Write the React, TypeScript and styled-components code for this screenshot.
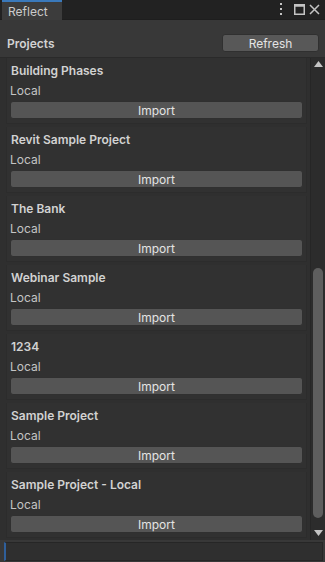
import React from "react";
import styled, { createGlobalStyle } from "styled-components";

const Global = createGlobalStyle`
  html, body { margin: 0; padding: 0; background: #383838; }
  body { font-family: Inter, "Noto Sans", "Liberation Sans", sans-serif; }
  * { box-sizing: border-box; }
`;

const Window = styled.div`
  width: 325px;
  height: 562px;
  display: flex;
  flex-direction: column;
  background: #383838;
  overflow: hidden;
`;

const TabBar = styled.div`
  height: 20px;
  flex: none;
  display: flex;
  align-items: flex-end;
  justify-content: space-between;
  background: #222222;
  border-bottom: 1px solid #1e1e1e;
`;

const Tab = styled.div`
  width: 60px;
  height: 20px;
  margin-left: 2px;
  margin-bottom: -1px;
  padding-left: 6px;
  display: flex;
  align-items: center;
  background: #3c3c3c;
  border-top: 2px solid #3a79bb;
  color: #cccccc;
  font-size: 12px;
`;

const TabIcons = styled.div`
  display: flex;
  align-items: center;
  height: 20px;
  padding-right: 5px;
`;

const IconSlot = styled.span<{ $gap: number }>`
  display: flex;
  margin-left: ${(p) => p.$gap}px;
`;

const Header = styled.div`
  height: 37px;
  flex: none;
  display: flex;
  align-items: flex-end;
  justify-content: space-between;
  padding: 0 6px 5px 7px;
`;

const Title = styled.div`
  color: #d2d2d2;
  font-size: 12px;
  font-weight: 600;
  padding-bottom: 1px;
`;

const Button = styled.div<{ $w?: number }>`
  height: 18px;
  width: ${(p) => (p.$w ? `${p.$w}px` : "auto")};
  display: flex;
  align-items: center;
  justify-content: center;
  background: #585858;
  border: 1px solid #303030;
  border-radius: 3px;
  color: #e4e4e4;
  font-size: 12px;
`;

const ScrollArea = styled.div`
  flex: 1;
  display: flex;
  min-height: 0;
  background: #2f2f2f;
  border-top: 1px solid #2a2a2a;
`;

const List = styled.div`
  flex: 1;
  display: flex;
  flex-direction: column;
  gap: 3px;
  padding: 0 3px 0 6px;
  overflow: hidden;
`;

const Card = styled.div`
  height: 66px;
  flex: none;
  display: flex;
  flex-direction: column;
  padding: 3px 3px 0 3px;
  background: #313131;
  border: 1px solid #2c2c2c;
  border-top: none;
`;

const CardTitle = styled.div`
  color: #d2d2d2;
  font-size: 12px;
  font-weight: 600;
  height: 20px;
  line-height: 20px;
  padding-left: 1px;
`;

const CardSub = styled.div`
  color: #c4c4c4;
  font-size: 12px;
  height: 20px;
  line-height: 20px;
`;

const ImportButton = styled(Button)`
  height: 18px;
  background: #555555;
`;

const ScrollBar = styled.div`
  width: 15px;
  flex: none;
  display: flex;
  flex-direction: column;
  align-items: center;
  background: #2c2c2c;
  border-left: 1px solid #262626;
  padding: 3px 0 4px;
`;

const Track = styled.div`
  flex: 1;
  width: 100%;
  display: flex;
  flex-direction: column;
  justify-content: flex-end;
  align-items: center;
  padding: 0 0 12px;
`;

const Thumb = styled.div`
  width: 10px;
  height: 250px;
  background: #5e5e5e;
  border-radius: 5px;
`;

const Footer = styled.div`
  height: 22px;
  flex: none;
  padding: 2px 2px 1px 4px;
  background: #383838;
`;

const FooterField = styled.div`
  height: 100%;
  background: #2f2f2f;
  border: 1px solid #262626;
  border-left: 2px solid #2f5f9a;
`;

const projects = [
  "Building Phases",
  "Revit Sample Project",
  "The Bank",
  "Webinar Sample",
  "1234",
  "Sample Project",
  "Sample Project - Local",
];

const Arrow = ({ up }: { up?: boolean }) => (
  <svg width="9" height="6" viewBox="0 0 9 6">
    <polygon points={up ? "4.5,0 9,6 0,6" : "0,0 9,0 4.5,6"} fill="#c4c4c4" />
  </svg>
);

export default function App() {
  return (
    <Window>
      <Global />
      <TabBar>
        <Tab>Reflect</Tab>
        <TabIcons>
          <IconSlot $gap={0}>
            <svg width="4" height="12" viewBox="0 0 4 12">
              <rect x="1" y="0" width="2" height="2" fill="#c4c4c4" />
              <rect x="1" y="5" width="2" height="2" fill="#c4c4c4" />
              <rect x="1" y="10" width="2" height="2" fill="#c4c4c4" />
            </svg>
          </IconSlot>
          <IconSlot $gap={11}>
            <svg width="11" height="11" viewBox="0 0 11 11">
              <rect x="0.75" y="0.75" width="9.5" height="9.5" fill="none" stroke="#c4c4c4" strokeWidth="1.5" />
              <rect x="0.75" y="0.75" width="9.5" height="2" fill="#c4c4c4" />
            </svg>
          </IconSlot>
          <IconSlot $gap={4}>
            <svg width="11" height="11" viewBox="0 0 11 11">
              <path d="M1 1 L10 10 M10 1 L1 10" stroke="#c4c4c4" strokeWidth="1.5" />
            </svg>
          </IconSlot>
        </TabIcons>
      </TabBar>
      <Header>
        <Title>Projects</Title>
        <Button $w={97}>Refresh</Button>
      </Header>
      <ScrollArea>
        <List>
          {projects.map((p) => (
            <Card key={p}>
              <CardTitle>{p}</CardTitle>
              <CardSub>Local</CardSub>
              <ImportButton>Import</ImportButton>
            </Card>
          ))}
        </List>
        <ScrollBar>
          <Arrow up />
          <Track>
            <Thumb />
          </Track>
          <Arrow />
        </ScrollBar>
      </ScrollArea>
      <Footer>
        <FooterField />
      </Footer>
    </Window>
  );
}
